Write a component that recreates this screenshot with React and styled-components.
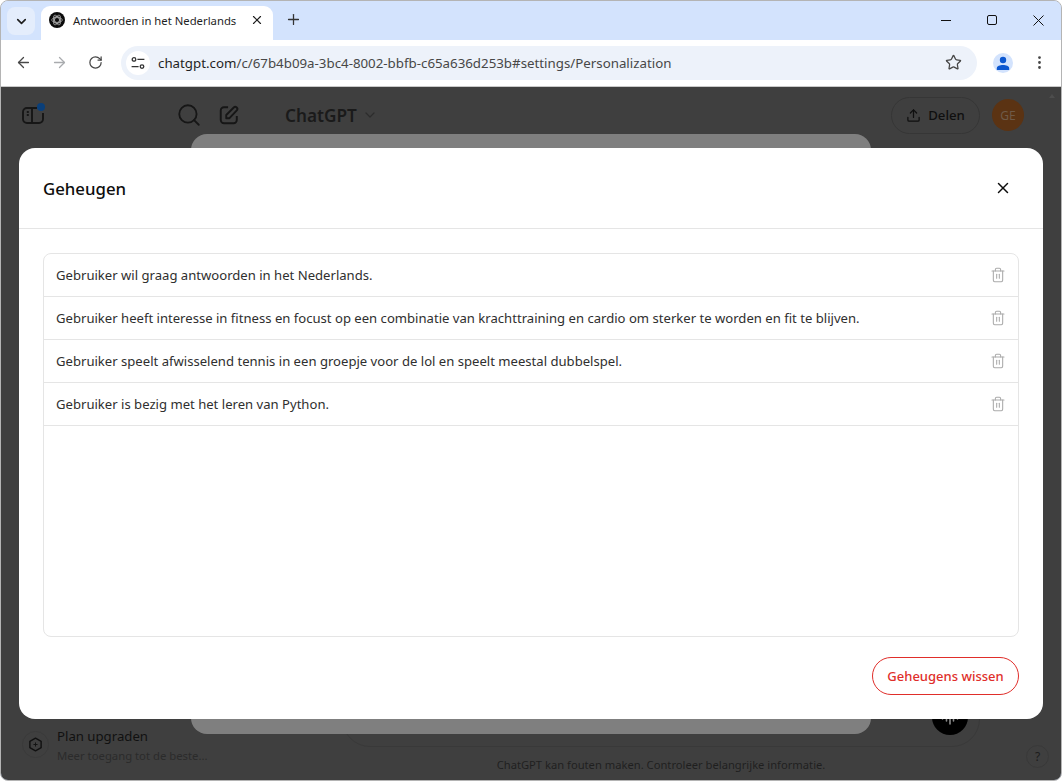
import React from 'react';
import styled, { createGlobalStyle } from 'styled-components';
import {
  ArrowLeft,
  ArrowRight,
  ChevronDown,
  EllipsisVertical,
  Plus,
  RotateCw,
  Search,
  Star,
  Trash2,
  Upload,
  X,
} from 'lucide-react';

const FONT = '"Noto Sans", "Open Sans", Arial, sans-serif';

const GlobalStyle = createGlobalStyle`
  html, body {
    margin: 0;
    padding: 0;
    background: #fff;
    font-family: ${FONT};
  }
  * { box-sizing: border-box; }
`;

const Window = styled.div`
  width: 1062px;
  height: 781px;
  display: flex;
  flex-direction: column;
  overflow: hidden;
  border: 1px solid #b4b4b4;
  border-radius: 8px;
  background: #d3e3fd;
`;

/* browser chrome */
const TabStrip = styled.div`
  height: 39px;
  flex: none;
  display: flex;
  align-items: flex-end;
  padding-left: 6px;
  background: #d3e3fd;
`;

const TabSearch = styled.div`
  width: 28px;
  height: 28px;
  margin-bottom: 5px;
  display: flex;
  align-items: center;
  justify-content: center;
  border-radius: 8px;
  background: #e4edfc;
  color: #1f1f1f;
`;

const Tab = styled.div`
  width: 232px;
  height: 34px;
  margin-left: 6px;
  padding: 0 9px 6px 8px;
  display: flex;
  align-items: center;
  border-radius: 9px 9px 0 0;
  background: #fff;
`;

const TabTitle = styled.span`
  flex: 1;
  margin-left: 8px;
  font-size: 11.3px;
  color: #1f1f1f;
  white-space: nowrap;
`;

const NewTab = styled.div`
  width: 28px;
  height: 28px;
  margin: 0 0 7px 6px;
  display: flex;
  align-items: center;
  justify-content: center;
  color: #333;
`;

const WindowControls = styled.div`
  margin: 0 0 6px auto;
  height: 28px;
  display: flex;
  align-items: center;
`;

const WindowButton = styled.div`
  width: 46px;
  display: flex;
  justify-content: center;
  color: #111;
`;

const Toolbar = styled.div`
  height: 47px;
  flex: none;
  display: flex;
  align-items: center;
  padding: 0 8px 1px 4px;
  background: #fff;
  border-bottom: 1px solid #c9c9c9;
`;

const NavButton = styled.div`
  width: 36px;
  display: flex;
  justify-content: center;
  color: ${(p) => (p.$disabled ? '#a9abae' : '#474747')};
`;

const Omnibox = styled.div`
  width: 856px;
  height: 34px;
  margin-left: 8px;
  padding: 0 15px 0 5px;
  display: flex;
  align-items: center;
  border-radius: 17px;
  background: #edf2fa;
`;

const SiteInfo = styled.div`
  width: 24px;
  height: 24px;
  display: flex;
  align-items: center;
  justify-content: center;
  border-radius: 50%;
  background: #fff;
`;

const Url = styled.span`
  flex: 1;
  margin-left: 8px;
  font-size: 13.3px;
  color: #1f1f1f;
  white-space: nowrap;
`;

const UrlPath = styled.span`
  color: #474747;
`;

const ProfileButton = styled.div`
  width: 20px;
  height: 20px;
  margin-left: 16px;
  display: flex;
  align-items: center;
  justify-content: center;
  border-radius: 50%;
  background: #d3e3fd;
`;

const MenuButton = styled.div`
  width: 20px;
  margin-left: 16px;
  display: flex;
  justify-content: center;
  color: #474747;
`;

/* dimmed chatgpt page */
const Viewport = styled.div`
  position: relative;
  flex: 1;
  display: flex;
  min-height: 0;
  background: #3f3f3f;
`;

const Sidebar = styled.aside`
  width: 260px;
  flex: none;
  display: flex;
  flex-direction: column;
  justify-content: space-between;
`;

const SidebarHead = styled.div`
  height: 56px;
  padding: 0 20px 0 21px;
  display: flex;
  align-items: center;
  color: #161616;
`;

const HeadActions = styled.div`
  margin-left: auto;
  padding-right: 1px;
  display: flex;
  gap: 16px;
  align-items: center;
`;

const PlanRow = styled.div`
  height: 50px;
  margin-bottom: 9px;
  padding-left: 21px;
  display: flex;
  align-items: center;
  gap: 8px;
`;

const PlanIcon = styled.div`
  width: 27px;
  height: 27px;
  margin-bottom: 4px;
  display: flex;
  align-items: center;
  justify-content: center;
  border-radius: 50%;
  border: 1px solid #3a3a3a;
  color: #111;
`;

const PlanTitle = styled.div`
  font-size: 13.2px;
  line-height: 19px;
  color: #111;
`;

const PlanSub = styled.div`
  font-size: 11.3px;
  line-height: 19px;
  color: #2b2b2b;
`;

const Main = styled.main`
  flex: 1;
  display: flex;
  flex-direction: column;
  align-items: center;
`;

const MainHead = styled.div`
  align-self: stretch;
  height: 56px;
  padding: 0 37px 0 24px;
  display: flex;
  align-items: center;
`;

const ModelName = styled.span`
  font-size: 17.2px;
  font-weight: 600;
  color: #1a1a1a;
`;

const ModelChevron = styled.span`
  margin-left: 5px;
  display: flex;
  color: #2c2c2c;
`;

const ShareButton = styled.div`
  margin-left: auto;
  width: 89px;
  height: 37px;
  display: flex;
  align-items: center;
  justify-content: center;
  gap: 7px;
  border: 1px solid #363636;
  border-radius: 19px;
  font-size: 13.2px;
  font-weight: 500;
  color: #0f0f0f;
`;

const Avatar = styled.div`
  width: 32px;
  height: 32px;
  margin-left: 12px;
  display: flex;
  align-items: center;
  justify-content: center;
  border-radius: 50%;
  background: #5b3313;
  font-size: 12px;
  color: #6f5a48;
`;

const Composer = styled.div`
  width: 638px;
  height: 100px;
  margin-top: auto;
  padding: 0 11px 11px 0;
  display: flex;
  align-items: flex-end;
  justify-content: flex-end;
  border: 1px solid #393939;
  border-radius: 28px;
`;

const SendButton = styled.div`
  width: 36px;
  height: 36px;
  display: flex;
  align-items: center;
  justify-content: center;
  border-radius: 50%;
  background: #000;
`;

const Disclaimer = styled.div`
  height: 33px;
  padding-top: 9px;
  font-size: 11.2px;
  line-height: 18px;
  color: #1f1f1f;
`;

const HelpButton = styled.div`
  position: absolute;
  right: 12px;
  bottom: 12px;
  width: 23px;
  height: 23px;
  display: flex;
  align-items: center;
  justify-content: center;
  border: 1px solid #393939;
  border-radius: 50%;
  font-size: 12px;
  color: #1c1c1c;
`;

const ScrollArrow = styled.div`
  position: absolute;
  top: 7px;
  right: 6px;
  width: 0;
  height: 0;
  border-left: 3.5px solid transparent;
  border-right: 3.5px solid transparent;
  border-bottom: 4px solid #4d4d4d;
`;

/* settings dialog under the memory modal */
const Backdrop = styled.div`
  position: absolute;
  inset: 0;
  display: flex;
  align-items: center;
  justify-content: center;
`;

const SettingsDialog = styled.div`
  width: 680px;
  height: 600px;
  border-radius: 16px;
  background: #7f7f7f;
`;

const Modal = styled.section`
  width: 1024px;
  height: 571px;
  display: flex;
  flex-direction: column;
  border-radius: 16px;
  background: #fff;
`;

const ModalHeader = styled.header`
  height: 81px;
  flex: none;
  padding: 0 24px;
  display: flex;
  align-items: center;
  justify-content: space-between;
  border-bottom: 1px solid #e5e5e5;
`;

const ModalTitle = styled.h2`
  margin: 0;
  font-size: 16.8px;
  font-weight: 500;
  color: #0d0d0d;
`;

const CloseButton = styled.button`
  width: 32px;
  height: 32px;
  padding: 0;
  display: flex;
  align-items: center;
  justify-content: center;
  border: none;
  background: none;
  color: #0d0d0d;
`;

const ModalBody = styled.div`
  flex: 1;
  padding: 24px 24px 24px;
  display: flex;
  flex-direction: column;
`;

const MemoryList = styled.ul`
  flex: 1;
  margin: 0;
  padding: 0;
  list-style: none;
  border: 1px solid #e5e5e5;
  border-radius: 8px;
`;

const MemoryRow = styled.li`
  height: 43px;
  padding: 0 12px;
  display: flex;
  align-items: center;
  justify-content: space-between;
  border-bottom: 1px solid #e5e5e5;
  font-size: 13.1px;
  color: #2f2f2f;
`;

const TrashButton = styled.span`
  display: flex;
  color: #ababab;
`;

const ModalFooter = styled.div`
  margin-top: 20px;
  display: flex;
  justify-content: flex-end;
`;

const ClearButton = styled.button`
  width: 147px;
  height: 38px;
  padding: 0;
  border: 1px solid #e02e2a;
  border-radius: 19px;
  background: #fff;
  font-family: ${FONT};
  font-size: 13px;
  font-weight: 500;
  color: #e02e2a;
`;

const memories = [
  'Gebruiker wil graag antwoorden in het Nederlands.',
  'Gebruiker heeft interesse in fitness en focust op een combinatie van krachttraining en cardio om sterker te worden en fit te blijven.',
  'Gebruiker speelt afwisselend tennis in een groepje voor de lol en speelt meestal dubbelspel.',
  'Gebruiker is bezig met het leren van Python.',
];

const Favicon = () => (
  <svg width="16" height="16" viewBox="0 0 16 16">
    <circle cx="8" cy="8" r="8" fill="#0b0b0b" />
    <g fill="none" stroke="#b8b8b8" strokeWidth="0.7">
      <ellipse cx="8" cy="8" rx="5.4" ry="2.4" />
      <ellipse cx="8" cy="8" rx="5.4" ry="2.4" transform="rotate(60 8 8)" />
      <ellipse cx="8" cy="8" rx="5.4" ry="2.4" transform="rotate(120 8 8)" />
      <circle cx="8" cy="8" r="3.6" />
    </g>
  </svg>
);

const TuneIcon = () => (
  <svg width="14" height="14" viewBox="0 0 14 14" fill="none" stroke="#333" strokeWidth="1.3">
    <circle cx="3" cy="3.4" r="1.8" />
    <path d="M6.4 3.4H13.4" />
    <circle cx="11" cy="10.6" r="1.8" />
    <path d="M.6 10.6H7.6" />
  </svg>
);

const ProfileIcon = () => (
  <svg width="14" height="14" viewBox="0 0 14 14" fill="#0b57d0">
    <circle cx="7" cy="4" r="3.2" />
    <path d="M.8 14v-1.6C.8 10 4 9 7 9s6.2 1 6.2 3.4V14Z" />
  </svg>
);

const SidebarIcon = () => (
  <svg width="24" height="24" viewBox="0 0 24 24" fill="none" stroke="#161616" strokeWidth="1.9">
    <path d="M15 5H5a4 4 0 0 0-4 4v7a4 4 0 0 0 4 4h12a4 4 0 0 0 4-4v-6" />
    <path d="M10 5v15M4.8 9h2M4.8 12h2" />
    <circle cx="19" cy="4" r="4" fill="#0a3f7a" stroke="none" />
  </svg>
);

const EditIcon = () => (
  <svg width="22" height="22" viewBox="0 0 24 24" fill="none" stroke="#161616" strokeWidth="2.1" strokeLinejoin="round">
    <path d="M11 3.5H6.5a3.5 3.5 0 0 0-3.5 3.5v10.5A3.5 3.5 0 0 0 6.500 21H17a3.500 3.500 0 0 0 3.500-3.500V13" />
    <path d="M9 15.500v-3.500L17.200 3.800a2.300 2.300 0 0 1 3.300 3.200L12.500 15.500Z" />
  </svg>
);

const HexIcon = () => (
  <svg width="15" height="15" viewBox="0 0 16 16" fill="none" stroke="#111" strokeWidth="1.5">
    <path d="M8 1.200 14 4.600v6.800L8 14.800 2 11.400V4.600Z" strokeLinejoin="round" />
    <path d="M8 5.800v4.400M5.800 8h4.400" strokeWidth="1" />
  </svg>
);

const VoiceIcon = () => (
  <svg width="20" height="20" viewBox="0 0 20 20" stroke="#8a8a8a" strokeWidth="1.6" strokeLinecap="round">
    <path d="M2.500 8v4M6.500 5v9M10 2v15M13.500 5v9M17.500 8v4" />
  </svg>
);

const App = () => (
  <Window>
    <GlobalStyle />
    <TabStrip>
      <TabSearch>
        <ChevronDown size={15} strokeWidth={2.6} />
      </TabSearch>
      <Tab>
        <Favicon />
        <TabTitle>Antwoorden in het Nederlands</TabTitle>
        <X size={14} strokeWidth={2} color="#1f1f1f" />
      </Tab>
      <NewTab>
        <Plus size={17} strokeWidth={1.8} />
      </NewTab>
      <WindowControls>
        <WindowButton>
          <svg width="10" height="10" viewBox="0 0 10 10" stroke="#111">
            <path d="M0 5.500h10" />
          </svg>
        </WindowButton>
        <WindowButton>
          <svg width="10" height="10" viewBox="0 0 10 10" fill="none" stroke="#111">
            <rect x="0.5" y="0.5" width="9" height="9" rx="1.5" />
          </svg>
        </WindowButton>
        <WindowButton>
          <svg width="11" height="11" viewBox="0 0 11 11" stroke="#111">
            <path d="M.5.5l10 10M10.500.5l-10 10" />
          </svg>
        </WindowButton>
      </WindowControls>
    </TabStrip>

    <Toolbar>
      <NavButton>
        <ArrowLeft size={17} strokeWidth={1.8} />
      </NavButton>
      <NavButton $disabled>
        <ArrowRight size={17} strokeWidth={1.8} />
      </NavButton>
      <NavButton>
        <RotateCw size={15} strokeWidth={2} />
      </NavButton>
      <Omnibox>
        <SiteInfo>
          <TuneIcon />
        </SiteInfo>
        <Url>
          chatgpt.com<UrlPath>/c/67b4b09a-3bc4-8002-bbfb-c65a636d253b#settings/Personalization</UrlPath>
        </Url>
        <Star size={17} strokeWidth={1.8} color="#474747" />
      </Omnibox>
      <ProfileButton>
        <ProfileIcon />
      </ProfileButton>
      <MenuButton>
        <EllipsisVertical size={17} strokeWidth={2} />
      </MenuButton>
    </Toolbar>

    <Viewport>
      <Sidebar>
        <SidebarHead>
          <SidebarIcon />
          <HeadActions>
            <Search size={26} strokeWidth={1.7} />
            <EditIcon />
          </HeadActions>
        </SidebarHead>
        <PlanRow>
          <PlanIcon>
            <HexIcon />
          </PlanIcon>
          <div>
            <PlanTitle>Plan upgraden</PlanTitle>
            <PlanSub>Meer toegang tot de beste...</PlanSub>
          </div>
        </PlanRow>
      </Sidebar>
      <Main>
        <MainHead>
          <ModelName>ChatGPT</ModelName>
          <ModelChevron>
            <ChevronDown size={16} strokeWidth={1.8} />
          </ModelChevron>
          <ShareButton>
            <Upload size={15} strokeWidth={2} />
            Delen
          </ShareButton>
          <Avatar>GE</Avatar>
        </MainHead>
        <Composer>
          <SendButton>
            <VoiceIcon />
          </SendButton>
        </Composer>
        <Disclaimer>ChatGPT kan fouten maken. Controleer belangrijke informatie.</Disclaimer>
      </Main>
      <HelpButton>?</HelpButton>
      <ScrollArrow />

      <Backdrop>
        <SettingsDialog />
      </Backdrop>
      <Backdrop>
        <Modal>
          <ModalHeader>
            <ModalTitle>Geheugen</ModalTitle>
            <CloseButton>
              <X size={18} strokeWidth={2} />
            </CloseButton>
          </ModalHeader>
          <ModalBody>
            <MemoryList>
              {memories.map((text) => (
                <MemoryRow key={text}>
                  {text}
                  <TrashButton>
                    <Trash2 size={16} strokeWidth={1.6} />
                  </TrashButton>
                </MemoryRow>
              ))}
            </MemoryList>
            <ModalFooter>
              <ClearButton>Geheugens wissen</ClearButton>
            </ModalFooter>
          </ModalBody>
        </Modal>
      </Backdrop>
    </Viewport>
  </Window>
);

export default App;
